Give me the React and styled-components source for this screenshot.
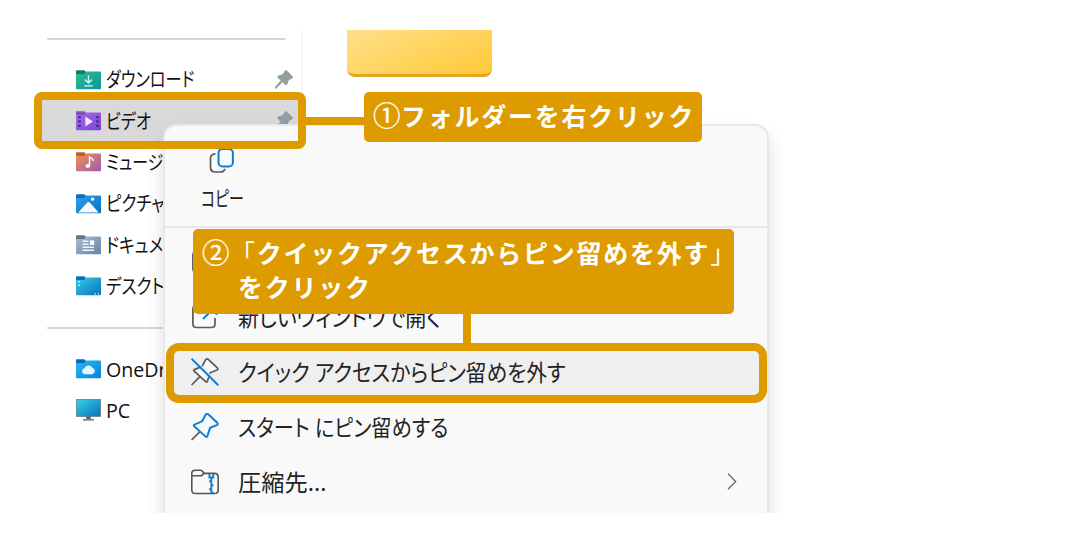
import * as React from 'react'
import styled, { createGlobalStyle } from 'styled-components';


const places = [
    { name: 'ダウンロード', icon: 'download', pinned: true, squeeze: 0.81 },
    { name: 'ビデオ', icon: 'video', pinned: true, selected: true, squeeze: 0.81 },
    { name: 'ミュージック', icon: 'music', squeeze: 0.79 },
    { name: 'ピクチャ', icon: 'picture', squeeze: 0.83 },
    { name: 'ドキュメント', icon: 'document', squeeze: 0.83 },
    { name: 'デスクトップ', icon: 'desktop', squeeze: 0.83 },
]

const drives = [
    { name: 'OneDrive', icon: 'onedrive', squeeze: 0.98 },
    { name: 'PC', icon: 'pc', squeeze: 0.98 },
]

const folderColors = {
    download: ['#0f7d5c', '#2ebd8b', '#0a96a0'],
    video: ['#7b57b5', '#a66df0', '#7d3fd6'],
    music: ['#bd6211', '#f78f55', '#9a5bb0'],
    picture: ['#0a70c4', '#2aa5ea', '#0b6cc2'],
    document: ['#5c7a87', '#a9bccf', '#6683a8'],
    desktop: ['#0a6fc4', '#35cfe4', '#0b6fc0'],
    onedrive: ['#0768c4', '#23bdf2', '#0a80d8'],
}

const FolderMark = ({ icon }) => {
    switch (icon) {
        case 'download':
            return <path d="M12.5 5.2v7.8M8.9 9.6l3.6 3.5 3.6-3.5M8.2 15.9h8.6" fill="none" stroke="#dffbef" strokeWidth="1.4" />
        case 'video':
            return (
                <>
                    <path d="M9.4 5.6v9.8l7.4-4.9z" fill="#f3eaff" />
                    <path d="M2.2 5h2.6v2.3H2.2zM2.2 9.3h2.6v2.3H2.2zM2.2 13.8h2.6V16H2.2zM20.2 5h2.6v2.3h-2.6zM20.2 9.3h2.6v2.3h-2.6zM20.2 13.8h2.6V16h-2.6z" fill="#4b2a86" />
                </>
            )
        case 'music':
            return (
                <>
                    <ellipse cx="11.8" cy="13.9" rx="2.3" ry="1.9" fill="#fff" />
                    <path d="M13.5 14V5l3.4 2.4v1.7" fill="none" stroke="#fff" strokeWidth="1.4" />
                </>
            )
        case 'picture':
            return (
                <>
                    <path d="M2.2 18.4l9-9.8q1.2-1.2 2.5 0l9 9.8z" fill="#f4faff" />
                    <circle cx="16.6" cy="5.2" r="1.6" fill="#fff" />
                </>
            )
        case 'document':
            return (
                <>
                    <path d="M6.5 6.2h6M6.5 9.2h6M6.5 12.2h11.5M6.5 15.2h11.5" stroke="#f2f6fa" strokeWidth="1.5" />
                    <path d="M14 5.4h4.2v4.6H14z" fill="#fff" />
                </>
            )
        case 'desktop':
            return <path d="M2.4 5h1.5v1.5H2.4zM2.4 8.6h1.5v1.5H2.4zM18.7 17.2h1.3v1.3h-1.3zM21.8 17.2h1.3v1.3h-1.3z" fill="#c9f6ff" />
        case 'onedrive':
            return <path d="M8.7 15.2a3 3 0 0 1-.3-5.9 4.4 4.4 0 0 1 8-.5 3.3 3.3 0 0 1-.2 6.4z" fill="#e8f6ff" />
        default:
            return null
    }
}

const PlaceIcon = ({ icon }) => {
    if (icon === 'pc') {
        return (
            <svg width="25" height="22" viewBox="0 0 25 22">
                <defs>
                    <linearGradient id="pc" x1="0" y1="0" x2="1" y2="1">
                        <stop offset="0" stopColor="#36d3df" />
                        <stop offset="1" stopColor="#0b6fc0" />
                    </linearGradient>
                </defs>
                <path d="M10.2 17h4.6v4h-4.6z" fill="#59646e" />
                <path d="M7 20h11v1.7H7z" fill="#7e8890" />
                <path d="M.4.4h24.2v17H.4z" fill="url(#pc)" stroke="#5b7482" strokeWidth=".8" />
            </svg>
        )
    }
    const [tab, from, to] = folderColors[icon]
    return (
        <svg width="25" height="20" viewBox="0 0 25 20">
            <defs>
                <linearGradient id={icon} x1="0" y1="0" x2="1" y2="1">
                    <stop offset="0" stopColor={from} />
                    <stop offset="1" stopColor={to} />
                </linearGradient>
            </defs>
            <path d="M0 1.2Q0 .2 1 .2h6.8q.8 0 1.2.6l.8 1V4.4H0z" fill={tab} />
            <path d="M0 4.1h7.4q1 0 1.5-.7l1-1.8H24q1 0 1 1v15.7q0 1-1 1H1q-1 0-1-1z" fill={`url(#${icon})`} />
            <FolderMark icon={icon} />
        </svg>
    )
}

const GreyPin = () => (
    <svg width="18" height="19" viewBox="0 0 18 19">
        <path d="M10.3.9q.7-.8 1.5 0l5.5 5.6q.8 1-.3 1.5l-3.5 1.7-1.6 4.5q-.5 1.1-1.4.3L7.4 11.9 1 18.2l-.9.1.1-1L6 10.6 3 7.5q-.7-.9.3-1.4l4.6-1.6z" fill="#929da4" stroke="#929da4" strokeWidth=".9" />
    </svg>
)

const pinHead = 'M14.7 1.6q1.4-1.3 2.8 0l8.8 8.2q1.2 1.4-.4 2.3l-6.8 2.7-2.8 8.6q-.6 1.2-1.6.2L3.2 13.2q-1-1 .3-1.6l7.6-3.3z'

const UnpinIcon = () => (
    <svg width="28" height="28" viewBox="0 0 28 28" fill="none" strokeWidth="1.7">
        <path d={pinHead} stroke="#5a5a5a" fill="#f9f9f9" />
        <path d="M8.9 18.7L.6 27" stroke="#5a5a5a" />
        <path d="M1.4-.3l26.8 26.600" stroke="#efefef" strokeWidth="1.500" />
        <path d="M.5.7l26.8 26.6" stroke="#0d7fd6" strokeWidth="2" />
    </svg>
)

const PinIcon = () => (
    <svg width="28" height="28" viewBox="0 0 28 28" fill="none">
        <path d="M8.9 18.7L.6 27" stroke="#5a5a5a" strokeWidth="1.7" />
        <path d={pinHead} stroke="#0d7fd6" strokeWidth="2" />
    </svg>
)

const ZipIcon = () => (
    <svg width="28" height="26" viewBox="0 0 28 26" fill="none" strokeWidth="1.6">
        <path d="M11.4 4.4H23.500q3.700 0 3.700 3.700v12.800q0 3.600-3.700 3.600h-19q-3.700 0-3.700-3.600V4.600q0-3.400 3.400-3.400h5.100q1.100 0 1.900.8l2 2.300-2 1.800q-.6.6-1.600.6H.9" stroke="#555" />
        <path d="M18.400 4.400v4.100h3.800V4.400M20.300 8.500v16.200M20.300 12.200h-2.200M20.300 16.200h2.200M20.300 20.200h-2.200M20.300 23.400h2.200" stroke="#0d7fd6" strokeWidth="1.900" />
    </svg>
)

const WindowIcon = () => (
    <svg width="28" height="24" viewBox="0 0 28 24" fill="none">
        <rect x="1.900" y="1" width="24" height="22" rx="4" stroke="#5a5a5a" strokeWidth="1.700" />
    </svg>
)

const OpenIcon = () => (
    <svg width="28" height="28" viewBox="0 0 28 28" fill="none" strokeWidth="1.700">
        <path d="M11 2.500H5.200Q1.900 2.500 1.900 6v15q0 3.500 3.700 3.500h14.700q3.700 0 3.700-3.500V15" stroke="#5a5a5a" />
        <path d="M12 16L25.500 2.500M16 2.500h9.500V12" stroke="#0d7fd6" strokeWidth="1.900" />
    </svg>
)

const CopyIcon = () => (
    <svg width="26" height="26" viewBox="0 0 26 26" fill="none" strokeWidth="1.700">
        <path d="M6.500 5.800q-5 .4-5 4.600v8.600q0 5 5 5h4.600q4 0 4.800-3.300" stroke="#5a5a5a" />
        <rect x="9.500" y="1" width="14.400" height="17.500" rx="4" stroke="#0d7fd6" strokeWidth="2" />
    </svg>
)

const Chevron = () => (
    <svg width="10" height="17" viewBox="0 0 10 17" fill="none">
        <path d="M1 .8l7.700 7.700L1 16.200" stroke="#666" strokeWidth="1.300" />
    </svg>
)

const PlaceRow = ({ place }) => (
    <Row $selected={place.selected}>
        <PlaceIcon icon={place.icon} />
        <RowText $squeeze={place.squeeze}>{place.name}</RowText>
        {place.pinned && <GreyPin />}
    </Row>
)

const App = () => {
    return(
        <Page>
            <GlobalStyle />
            <Explorer>
                <Sidebar>
                    <Divider />
                    <PlaceList $top="19.500px">
                        {places.map(place => <PlaceRow key={place.name} place={place} />)}
                    </PlaceList>
                    <Divider $top="20px" />
                    <PlaceList $top="19.500px">
                        {drives.map(place => <PlaceRow key={place.name} place={place} />)}
                    </PlaceList>
                </Sidebar>
                <Content>
                    <BigFolder />
                </Content>
                <ContextMenu>
                    <MenuHeader>
                        <CopyIcon />
                        <CopyText>コピー</CopyText>
                    </MenuHeader>
                    <MenuList>
                        <MenuItem>
                            <IconSlot><WindowIcon /></IconSlot>
                        </MenuItem>
                        <MenuItem>
                            <IconSlot><OpenIcon /></IconSlot>
                            <MenuText $squeeze={0.913}>新しいウィンドウで開く</MenuText>
                        </MenuItem>
                        <MenuItem $active>
                            <IconSlot><UnpinIcon /></IconSlot>
                            <MenuText $squeeze={0.9}>クイック アクセスからピン留めを外す</MenuText>
                        </MenuItem>
                        <MenuItem>
                            <IconSlot><PinIcon /></IconSlot>
                            <MenuText $squeeze={0.882}>スタート にピン留めする</MenuText>
                        </MenuItem>
                        <MenuItem>
                            <IconSlot><ZipIcon /></IconSlot>
                            <MenuText $squeeze={1.01}>圧縮先...</MenuText>
                            <Chevron />
                        </MenuItem>
                    </MenuList>
                </ContextMenu>
            </Explorer>
            <FolderFrame />
            <FolderLink />
            <FolderCallout>
                <p><Step>①</Step>フォルダーを右クリック</p>
            </FolderCallout>
            <UnpinFrame />
            <UnpinLink />
            <UnpinCallout>
                <p><Step>②</Step><Bracket>「</Bracket>クイックアクセスからピン留めを外す<Bracket>」</Bracket></p>
                <SecondLine>をクリック</SecondLine>
            </UnpinCallout>
        </Page>
    );
}

export default App

const GlobalStyle = createGlobalStyle`
    body {
        margin: 0;
        background: #fff;
    }

    p {
        margin: 0;
    }
`

const Page = styled.div`
    box-sizing: border-box;
    position: relative;
    width: 1080px;
    height: 543px;
    padding: 30px 0;
    overflow: hidden;
    background: #fff;
    font-family: "Noto Sans", "Noto Sans CJK JP", sans-serif;
`

const Explorer = styled.div`
    position: relative;
    display: flex;
    height: 483px;
    overflow: hidden;
`

const Sidebar = styled.div`
    box-sizing: border-box;
    width: 303px;
    padding-top: 7.500px;
    border-right: 2px solid #f6f6f6;
`

const Divider = styled.div`
    width: 239px;
    height: 2px;
    margin: ${props => props.$top || 0} 0 0 47px;
    border-radius: 1px;
    background: #d6d6d6;
`

const PlaceList = styled.div`
    padding-top: ${props => props.$top};
`

const Row = styled.div`
    box-sizing: border-box;
    display: flex;
    align-items: center;
    height: 41.300px;
    margin-left: 38px;
    padding: 0 8px 0 38px;
    background: ${props => props.$selected ? '#d9d9d9' : 'transparent'};

    svg {
        flex: none;
    }
`

const RowText = styled.span`
    flex: 1;
    margin-left: 4.500px;
    padding-top: 1.500px;
    color: #111;
    font-family: "Open Sans", "Noto Sans CJK JP", sans-serif;
    font-size: 20px;
    font-feature-settings: "palt";
    line-height: 28px;
    white-space: nowrap;
    transform: scaleX(${props => props.$squeeze});
    transform-origin: left center;
`

const Content = styled.div`
    padding-left: 44px;
`

const BigFolder = styled.div`
    box-sizing: border-box;
    width: 145px;
    height: 47px;
    border-bottom: 3px solid #e5a426;
    border-radius: 0 0 8px 8px;
    background: linear-gradient(155deg, #ffe08a 0%, #ffc938 100%);
`

const ContextMenu = styled.div`
    box-sizing: border-box;
    position: absolute;
    top: 94px;
    left: 163px;
    width: 606px;
    height: 480px;
    border: 2px solid #e8e8e8;
    border-radius: 14px;
    background: #f9f9f9;
    box-shadow: 0 10px 18px rgba(0, 0, 0, 0.13);
`

const MenuHeader = styled.div`
    box-sizing: border-box;
    display: flex;
    flex-flow: column;
    align-items: flex-start;
    height: 102px;
    padding: 22px 0 0 43.500px;
    border-bottom: 2px solid #e8e8e8;
`

const CopyText = styled.span`
    margin: 8px 0 0 -8px;
    color: #222;
    font-size: 21px;
    font-feature-settings: "palt";
    line-height: 32px;
    white-space: nowrap;
    transform: scaleX(0.71);
    transform-origin: left center;
`

const MenuList = styled.div`
    padding-top: 6px;
`

const MenuItem = styled.div`
    box-sizing: border-box;
    display: flex;
    align-items: center;
    height: 55px;
    margin: 0 4px;
    padding: 0 26px 0 22px;
    border-radius: 8px;
    background: ${props => props.$active ? '#efefef' : 'transparent'};
`

const IconSlot = styled.span`
    display: flex;
    flex: none;
    width: 28px;
    margin-left: -0.500px;
`

const MenuText = styled.span`
    flex: 1;
    margin-left: 19px;
    color: #222;
    font-size: 23px;
    font-feature-settings: "palt";
    line-height: 34px;
    white-space: nowrap;
    transform: scaleX(${props => props.$squeeze});
    transform-origin: left center;
`

/* Annotations drawn over the window */
const Frame = styled.div`
    box-sizing: border-box;
    position: absolute;
    border: 8px solid #de9b00;
`

const FolderFrame = styled(Frame)`
    top: 92px;
    left: 34px;
    width: 272px;
    height: 57px;
    border-radius: 8px;
`

const UnpinFrame = styled(Frame)`
    top: 343px;
    left: 166px;
    width: 601px;
    height: 60px;
    border-radius: 13px;
`

const Link = styled.div`
    position: absolute;
    background: #de9b00;
`

const FolderLink = styled(Link)`
    top: 117px;
    left: 305px;
    width: 60px;
    height: 8px;
`

const UnpinLink = styled(Link)`
    top: 313px;
    left: 463px;
    width: 8px;
    height: 31px;
`

const Callout = styled.div`
    box-sizing: border-box;
    position: absolute;
    border-radius: 5px;
    background: #de9b00;
    color: #fff;
    font-family: "Noto Sans CJK JP", sans-serif;
    font-size: 25px;
    font-weight: 700;
    letter-spacing: 1.750px;
    line-height: 34px;
    white-space: nowrap;
`

const Step = styled.span`
    display: inline-block;
    width: 28px;
    font-size: 27.500px;
    font-weight: 400;
    letter-spacing: 0;
    line-height: 30px;
    -webkit-text-stroke: 0.300px #fff;
`

const Bracket = styled.span`
    font-weight: 400;
`

const FolderCallout = styled(Callout)`
    top: 92px;
    left: 364px;
    width: 338px;
    height: 50px;
    padding: 6px 0 0 9px;
`

const UnpinCallout = styled(Callout)`
    top: 229px;
    left: 193px;
    width: 541px;
    height: 85px;
    padding: 6px 0 0 9px;
`

const SecondLine = styled.p`
    padding-left: 36px;
`
